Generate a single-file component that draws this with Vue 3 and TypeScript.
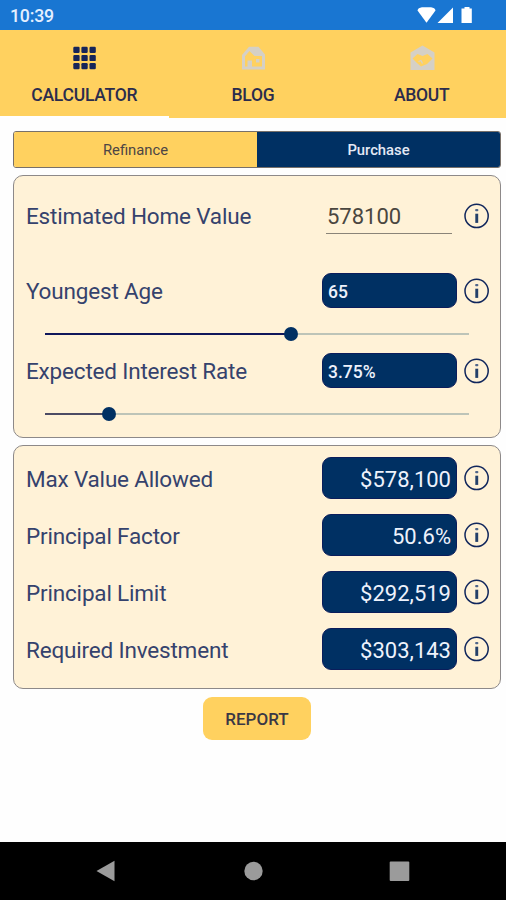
<script setup lang="ts">
import { computed, ref } from 'vue'

type Mode = 'Refinance' | 'Purchase'

const tabs = [
  { id: 'calculator', label: 'CALCULATOR' },
  { id: 'blog', label: 'BLOG' },
  { id: 'about', label: 'ABOUT' },
]
const modes: Mode[] = ['Refinance', 'Purchase']

const activeTab = ref('calculator')
const mode = ref<Mode>('Purchase')
const homeValue = ref('578100')

const sliders = [
  { label: 'Youngest Age', value: '65', percent: 58 },
  { label: 'Expected Interest Rate', value: '3.75%', percent: 15.1 },
]

const results = computed(() => [
  { label: 'Max Value Allowed', value: '$578,100' },
  { label: 'Principal Factor', value: '50.6%' },
  { label: 'Principal Limit', value: '$292,519' },
  { label: 'Required Investment', value: '$303,143' },
])
</script>

<template>
  <div class="screen">
    <svg width="0" height="0" class="defs">
      <symbol id="info" viewBox="0 0 26 26">
        <circle cx="12.600" cy="12.900" r="11.600" fill="none" stroke="#10265c" stroke-width="1.500" />
        <rect x="11.300" y="10.700" width="2.900" height="9.200" fill="#24406a" />
        <rect x="11.200" y="6" width="3.100" height="2.200" rx="0.800" fill="#50668a" />
      </symbol>
    </svg>

    <header class="status">
      <span class="clock">10:39</span>
      <svg class="signals" width="58" height="18" viewBox="0 0 58 18" fill="#fff">
        <path d="M0.500 4.500Q1 1.800 5 1.300H14Q18 1.800 18.500 4.500L9.500 16.800Z" />
        <path d="M20.500 17L36 1.500V17Z" />
        <path d="M47.500 1H52.500V2.500H54.800V17H44.500V2.500H47.500Z" />
      </svg>
    </header>

    <nav class="tabs">
      <button
        v-for="tab in tabs"
        :key="tab.id"
        class="tab"
        :class="{ active: activeTab === tab.id }"
        @click="activeTab = tab.id"
      >
        <svg v-if="tab.id === 'calculator'" class="tab-icon" viewBox="0 0 26 26" fill="#172559">
          <rect x="2.300" y="1.800" width="6.300" height="6.200" rx="1.200" />
          <rect x="10.400" y="1.800" width="6.300" height="6.200" rx="1.200" />
          <rect x="18.500" y="1.800" width="6.300" height="6.200" rx="1.200" />
          <rect x="2.300" y="9.900" width="6.300" height="6.200" rx="1.200" />
          <rect x="10.400" y="9.900" width="6.300" height="6.200" rx="1.200" />
          <rect x="18.500" y="9.900" width="6.300" height="6.200" rx="1.200" />
          <rect x="2.300" y="18" width="6.300" height="6.200" rx="1.200" />
          <rect x="10.400" y="18" width="6.300" height="6.200" rx="1.200" />
          <rect x="18.500" y="18" width="6.300" height="6.200" rx="1.200" />
        </svg>
        <svg v-else-if="tab.id === 'blog'" class="tab-icon" viewBox="0 0 26 26">
          <path
            fill="#d5d0c6"
            fill-rule="evenodd"
            d="M9 1.800H18.500L25 9.500V24.500H2V10ZM9.500 6L5 11.200V21.500H7.500V15.500H12V21.500H22V11H14.500ZM16 14H19.500V17.500H16Z"
          />
        </svg>
        <svg v-else class="tab-icon" viewBox="0 0 26 26">
          <path
            fill="#d5d0c6"
            fill-rule="evenodd"
            d="M13.500 0.500L25.500 7.500V25H1.500V7.500ZM8.500 9L3.500 13.500L8 18L12 21.500L18 19L23.500 13.500L18.500 9L13.500 11Z"
          />
          <path d="M9.500 16.500L12 15.500L13.500 18.500" fill="none" stroke="#d5d0c6" stroke-width="1.200" />
        </svg>
        <span>{{ tab.label }}</span>
      </button>
    </nav>

    <main class="content">
      <div class="segments">
        <button
          v-for="item in modes"
          :key="item"
          class="segment"
          :class="{ selected: mode === item }"
          @click="mode = item"
        >
          {{ item }}
        </button>
      </div>

      <section class="card inputs">
        <div class="row home">
          <label class="label" for="home-value">Estimated Home Value</label>
          <input id="home-value" v-model="homeValue" class="field" inputmode="numeric" />
          <svg class="info"><use href="#info" /></svg>
        </div>
        <div v-for="item in sliders" :key="item.label" class="adjust">
          <div class="row">
            <span class="label">{{ item.label }}</span>
            <span class="pill small">{{ item.value }}</span>
            <svg class="info"><use href="#info" /></svg>
          </div>
          <div class="slider">
            <span class="fill" :style="{ width: item.percent + '%' }"></span>
            <span class="thumb"></span>
            <span class="rest"></span>
          </div>
        </div>
      </section>

      <section class="card results">
        <div v-for="item in results" :key="item.label" class="row">
          <span class="label">{{ item.label }}</span>
          <span class="pill">{{ item.value }}</span>
          <svg class="info"><use href="#info" /></svg>
        </div>
      </section>

      <button class="report">REPORT</button>
    </main>

    <footer class="navbar">
      <svg viewBox="0 0 22 22"><path d="M0.500 11L18.500 0.700V21.300Z" /></svg>
      <svg viewBox="0 0 22 22"><circle cx="11.500" cy="11" r="9.200" /></svg>
      <svg viewBox="0 0 22 22"><rect x="1.700" y="1.500" width="19.600" height="19.600" rx="1" /></svg>
    </footer>
  </div>
</template>

<style>
body {
  margin: 0;
  background: #fff;
}
</style>

<style scoped>
.screen {
  box-sizing: border-box;
  display: flex;
  flex-direction: column;
  width: 506px;
  height: 900px;
  overflow: hidden;
  background: #fefefe;
  font-family: Roboto, "Liberation Sans", sans-serif;
  color: #10205c;
}
.screen * {
  box-sizing: border-box;
}
.defs {
  position: absolute;
}
button {
  margin: 0;
  padding: 0;
  border: 0;
  font-family: inherit;
  color: inherit;
}
.status {
  display: flex;
  flex: none;
  justify-content: space-between;
  height: 30px;
  padding: 6px 31px 0 10px;
  background: #1976d2;
  color: #e4efff;
}
.clock {
  font-size: 17.7px;
  line-height: 20px;
  letter-spacing: -0.2px;
  font-weight: 500;
}
.tabs {
  display: grid;
  flex: none;
  grid-template-columns: repeat(3, 1fr);
  height: 88px;
  background: #ffd15f;
}
.tab {
  display: flex;
  flex-direction: column;
  align-items: center;
  padding-top: 15px;
  border-bottom: 2px solid #ffd15f;
  background: none;
  font-size: 17.5px;
  line-height: 22px;
  letter-spacing: -0.25px;
  font-weight: 500;
  color: #2b2c4d;
}
.tab.active {
  border-bottom-color: #fff;
}
.tab-icon {
  width: 26px;
  height: 26px;
  margin-bottom: 13px;
}
.content {
  display: flex;
  flex: 1;
  flex-direction: column;
  padding: 13px 5px 0 13px;
}
.segments {
  display: grid;
  grid-template-columns: 1fr 1fr;
  height: 37px;
  border: 1px solid #77706a;
  border-radius: 3px;
  overflow: hidden;
}
.segment {
  background: #ffd15f;
  font-size: 14.8px;
  color: #4d4545;
}
.segment.selected {
  background: #003063;
  font-weight: 500;
  color: #e4e9f5;
}
.card {
  border: 1px solid #8d8989;
  border-radius: 10px;
  background: #fff2d7;
}
.row {
  display: flex;
  align-items: center;
  padding: 0 10px 0 12px;
}
.label {
  flex: 1;
  font-size: 22.5px;
  line-height: 28px;
  white-space: nowrap;
  color: #35426d;
  font-weight: 400;
  letter-spacing: -0.18px;
}
.info {
  width: 26px;
  height: 26px;
  margin-left: 7px;
}
.inputs {
  height: 263px;
  margin-top: 7px;
}
.home {
  height: 80px;
}
.field {
  width: 126px;
  height: 37px;
  margin: 0 5px 1px 0;
  padding: 2px 0 0 1px;
  border: 0;
  border-bottom: 1px solid #8a8478;
  outline: 0;
  background: none;
  font: 400 22px Roboto, sans-serif;
  color: #4a463f;
}
.pill {
  display: flex;
  align-items: center;
  justify-content: flex-end;
  width: 135px;
  height: 42px;
  padding: 3px 5px 0 5px;
  border-radius: 9px;
  background: #003063;
  border: 1px solid #0b1d5b;
  color: #eef2fc;
  font-size: 22px;
}
.pill.small {
  justify-content: flex-start;
  height: 35px;
  padding-top: 2px;
  font-size: 17.5px;
  font-weight: 500;
}
.adjust {
  height: 80px;
  padding-top: 17px;
}
.slider {
  display: flex;
  align-items: center;
  height: 16px;
  margin: 18px 31px 0 31px;
}
.fill {
  flex: none;
  height: 2px;
  margin-right: -7px;
  background: #10175b;
}
.adjust:last-child .fill {
  background: #4c4b64;
}
.thumb {
  z-index: 1;
  flex: none;
  width: 14px;
  height: 14px;
  border-radius: 50%;
  background: #003063;
}
.rest {
  flex: 1;
  height: 2px;
  background: #bdc4b8;
}
.results {
  display: flex;
  flex-direction: column;
  gap: 15px;
  height: 244px;
  margin-top: 7px;
  padding-top: 11px;
}
.results .label {
  padding-top: 1px;
}
.report {
  align-self: flex-start;
  width: 108px;
  height: 43px;
  margin: 8px 0 0 190px;
  border-radius: 9px;
  background: #ffd15f;
  font-size: 17px;
  font-weight: 500;
  color: #3a3845;
}
.navbar {
  display: flex;
  flex: none;
  justify-content: space-between;
  height: 58px;
  padding: 18px 96px 0;
  background: #000;
}
.navbar svg {
  width: 22px;
  height: 22px;
  fill: #9b9b9b;
}
</style>
